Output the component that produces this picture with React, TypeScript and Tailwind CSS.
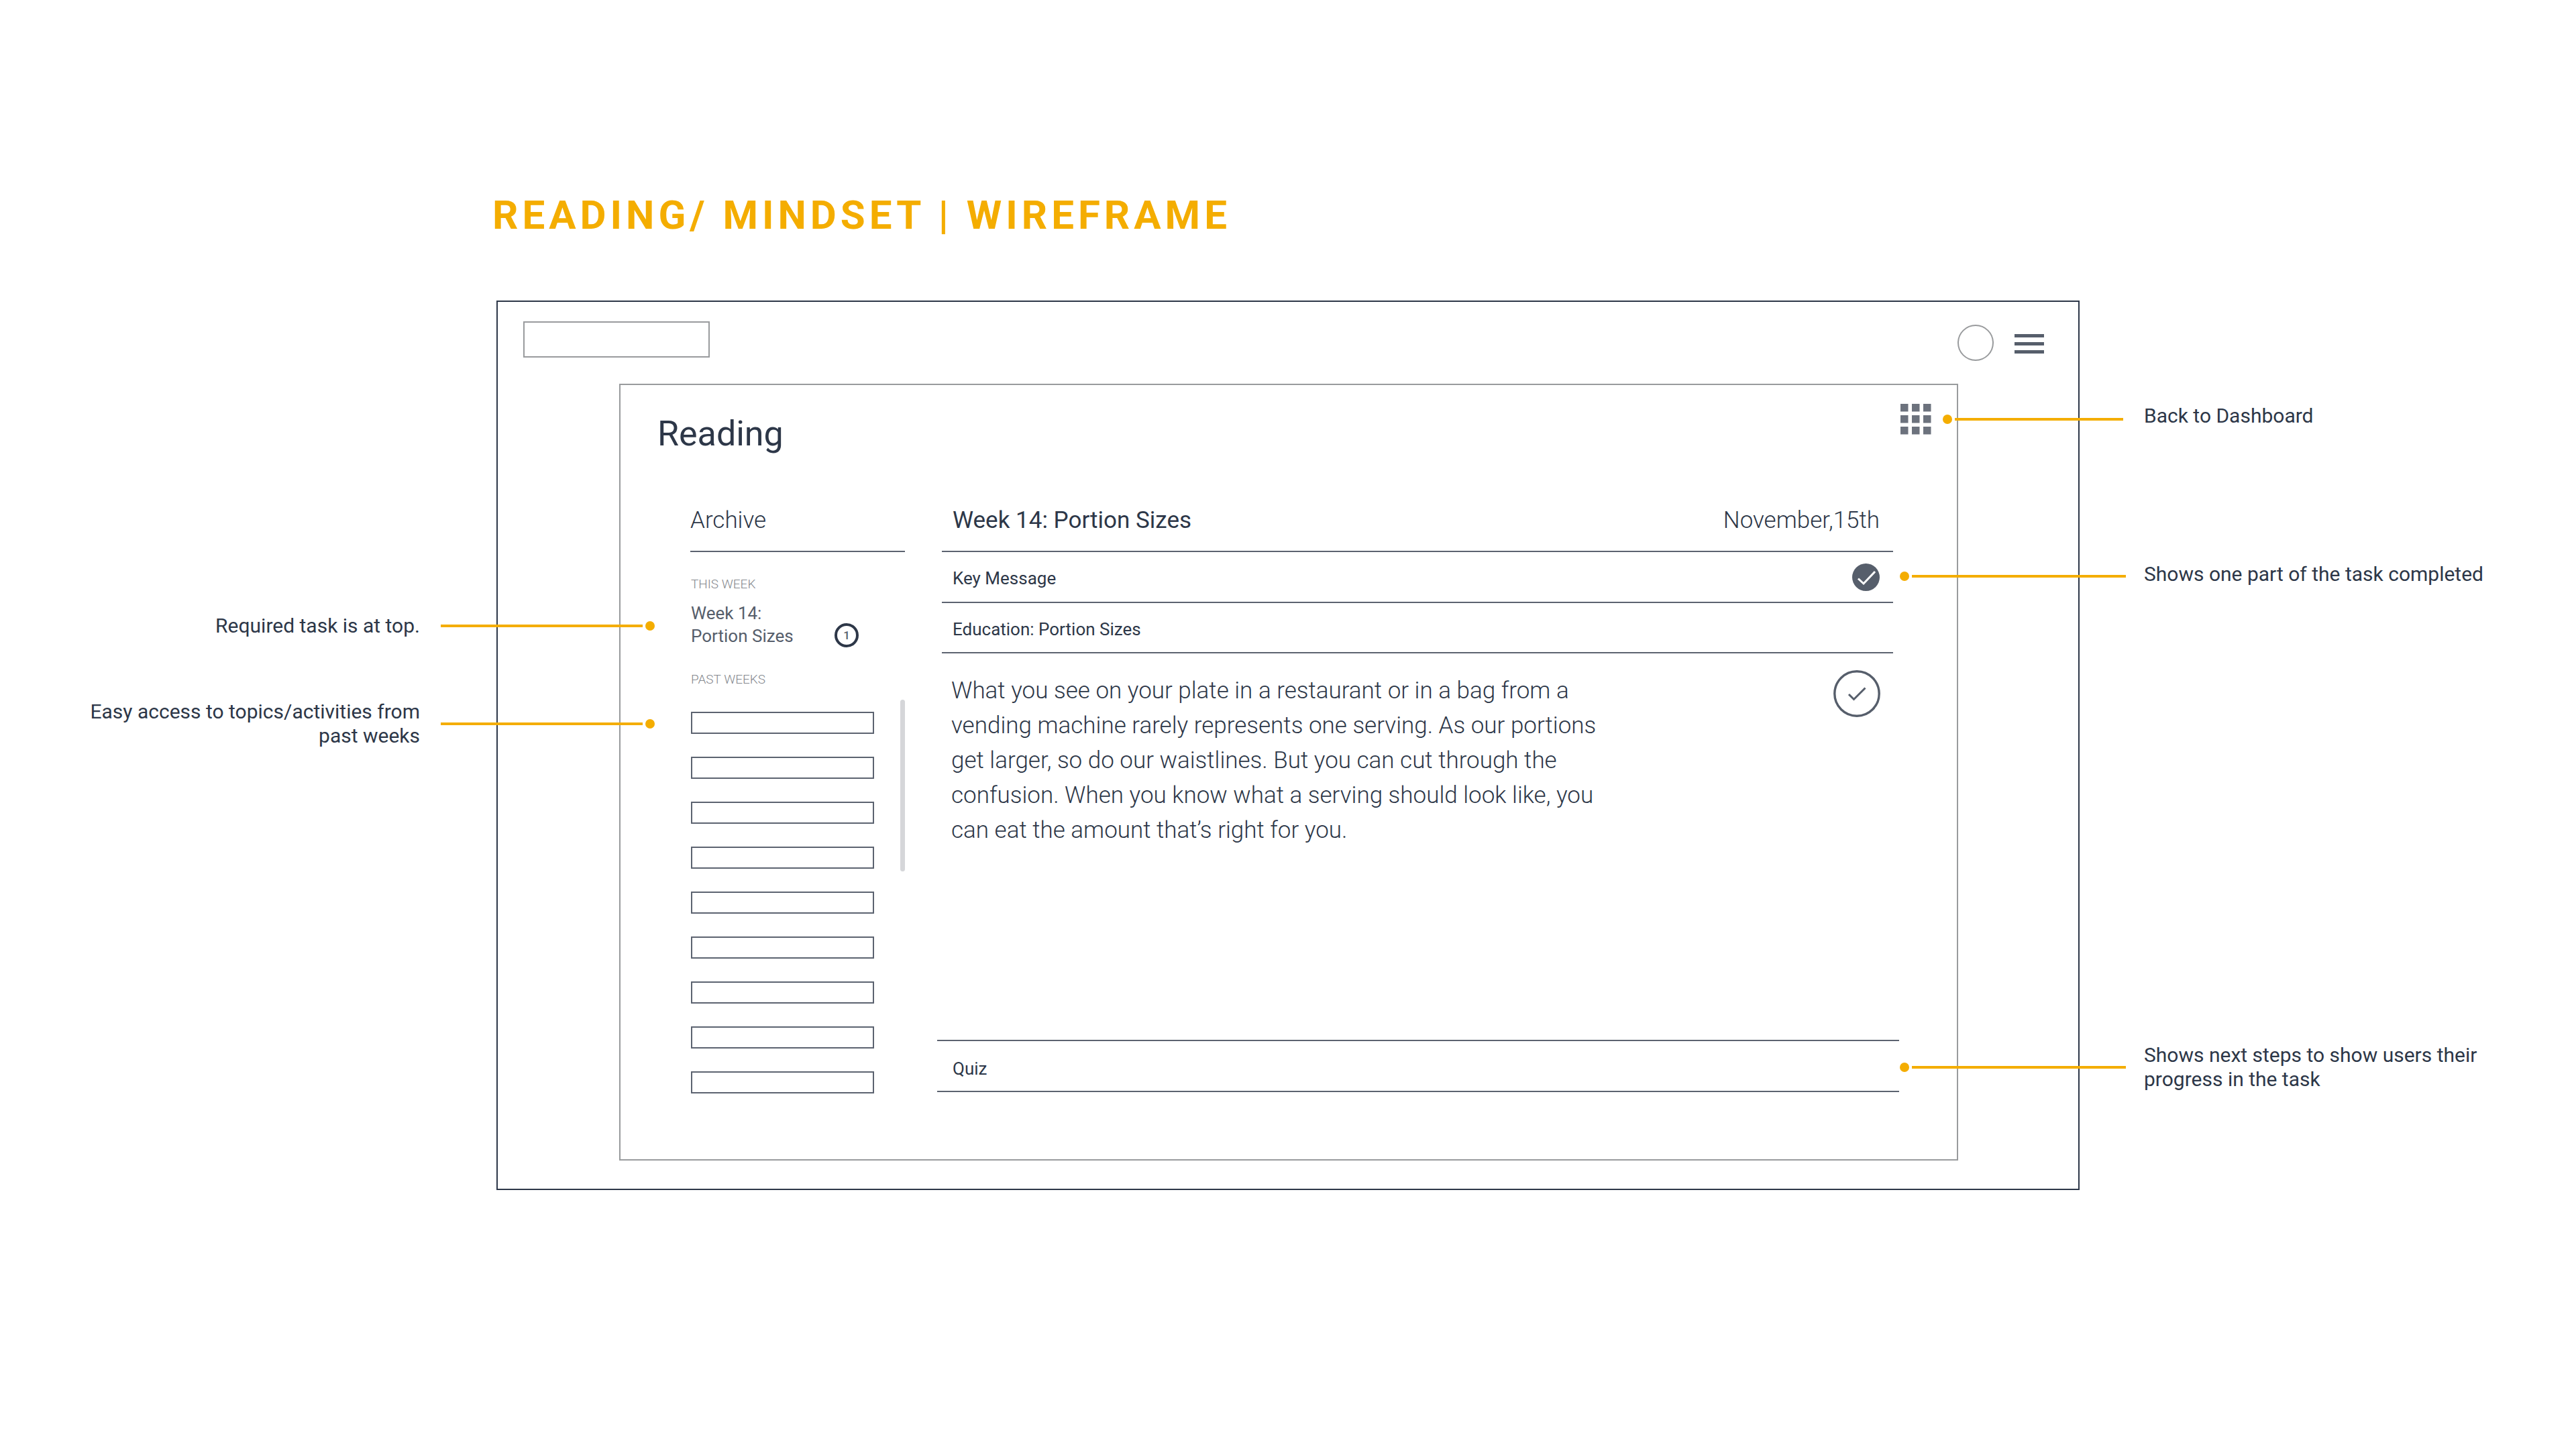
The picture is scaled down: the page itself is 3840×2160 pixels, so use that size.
import type { ReactNode } from "react";

const pastWeeks = [1, 2, 3, 4, 5, 6, 7, 8, 9];

function Leader({ side, length, place }: { side: "left" | "right"; length: string; place: string }) {
  const dot = <span className="size-[14px] shrink-0 rounded-full bg-[#f4ad00]" />;
  const line = <span className={`h-1 shrink-0 bg-[#f4ad00] ${length}`} />;
  return (
    <span aria-hidden="true" className={`absolute top-1/2 flex -translate-y-1/2 items-center gap-1 ${place}`}>
      {side === "left" ? line : dot}
      {side === "left" ? dot : line}
    </span>
  );
}

function LeftNote({ children, className }: { children: ReactNode; className: string }) {
  return (
    <p className={`relative z-10 w-[626px] pl-[100px] text-right ${className}`}>
      {children}
      <Leader side="left" length="w-[301px]" place="left-[657px]" />
    </p>
  );
}

function RightNote({ children, className, length, place }: { children: ReactNode; className: string; length: string; place: string }) {
  return (
    <p className={`relative z-10 ml-24 w-[540px] ${className}`}>
      {children}
      <Leader side="right" length={length} place={place} />
    </p>
  );
}

function GridIcon() {
  return (
    <svg viewBox="0 0 46 46" className="size-[46px] fill-[#6c727d]">
      {[0, 17, 34].map((y) => [0, 17, 34].map((x) => <rect key={`${x}-${y}`} x={x} y={y} width="11.5" height="11.5" />))}
    </svg>
  );
}

export default function App() {
  return (
    <div className="min-h-screen bg-white pt-[285px] font-['Roboto',sans-serif] text-[#2d3748]">
      <h1 className="ml-[734px] text-[60px] leading-[72px] font-bold tracking-[6px] text-[#f4ad00]">
        READING/ MINDSET | WIREFRAME
      </h1>

      <div className="mt-[91px] grid grid-cols-[740px_minmax(0,1fr)_740px]">
        <aside className="text-[30px] leading-9">
          <LeftNote className="mt-[467px]">Required task is at top.</LeftNote>
          <LeftNote className="mt-[92px]">Easy access to topics/activities from past weeks</LeftNote>
        </aside>

        <div className="border-2 border-[#2d3748] pr-[179px] pb-[42px] pl-[181px]">
          <header className="-mr-[128px] -ml-[143px] flex items-start justify-between pt-[29px]">
            <button type="button" aria-label="Home" className="h-[54px] w-[278px] border-2 border-[#999b9d]" />
            <div className="flex items-center gap-[31px] pt-[5px]">
              <button type="button" aria-label="Profile" className="size-[54px] rounded-full border-2 border-[#999b9d]" />
              <button type="button" aria-label="Menu" className="flex w-11 flex-col gap-[7px] pt-0.5">
                <span className="h-[5px] w-full bg-[#565e6b]" />
                <span className="h-[5px] w-full bg-[#565e6b]" />
                <span className="h-[5px] w-full bg-[#565e6b]" />
              </button>
            </div>
          </header>

          <main className="mt-[34px] border-2 border-[#999b9d] pb-[98px]">
            <div className="flex items-start justify-between pt-[28px] pr-[38px] pl-[55px]">
              <h2 className="pt-[13px] text-[52px] leading-[64px]">Reading</h2>
              <button type="button" aria-label="Dashboard">
                <GridIcon />
              </button>
            </div>

            <div className="mt-[62px] flex pl-[104px]">
              <nav aria-label="Archive" className="w-[320px] shrink-0">
                <h3 className="h-[82px] border-b-2 border-[#5c6370] pt-[11px] text-[35px] leading-[48px] font-light">Archive</h3>
                <div className="pl-px">
                  <h4 className="mt-[36px] text-[19px] leading-6 font-light text-[#85888e]">THIS WEEK</h4>
                  <a href="#week-14" className="mt-[14px] flex w-[250px] items-end justify-between text-[26px] leading-[34px] text-[#565e6b]">
                    <span>
                      Week 14:
                      <br />
                      Portion Sizes
                    </span>
                    <span className="flex size-9 items-center justify-center rounded-full border-4 border-[#2d3748] text-[17px] font-medium">1</span>
                  </a>
                  <h4 className="mt-[36px] text-[19px] leading-6 font-light text-[#85888e]">PAST WEEKS</h4>
                  <div className="mt-[18px] flex justify-between">
                    <ul className="mt-[18px] flex w-[273px] flex-col gap-[34px]">
                      {pastWeeks.map((week) => (
                        <li key={week} className="flex">
                          <button type="button" aria-label={`Past week ${week}`} className="h-[33px] w-full border-2 border-[#5c6370]" />
                        </li>
                      ))}
                    </ul>
                    <div className="h-[256px] w-[7px] rounded-full bg-[#d5d6d9]" />
                  </div>
                </div>
              </nav>

              <section className="mb-0.5 ml-[48px] flex grow flex-col pr-[86px]">
                <div className="mr-[9px] ml-[7px]">
                  <div className="flex h-[82px] justify-between border-b-2 border-[#5c6370] pt-[11px] pr-[20px] pl-[16px] text-[35px] leading-[48px]">
                    <h3>Week 14: Portion Sizes</h3>
                    <time className="font-light">November,15th</time>
                  </div>
                  <div className="flex h-[76px] items-center justify-between border-b-2 border-[#5c6370] pr-[20px] pl-[16px] text-[26px]">
                    <h4 className="pt-1">Key Message</h4>
                    <svg viewBox="0 0 41 41" className="size-[41px]" role="img" aria-label="Completed">
                      <circle cx="20.5" cy="20.5" r="20.5" fill="#565e6b" />
                      <path d="M9 22.5 L17 30 L34 12" fill="none" stroke="#fff" strokeWidth="3" />
                    </svg>
                  </div>
                  <div className="flex h-[75px] items-center border-b-2 border-[#5c6370] pl-[16px] text-[26px]">
                    <h4 className="pt-1.5">Education: Portion Sizes</h4>
                  </div>
                  <div className="flex justify-between pt-[25px] pr-[19px] pl-[14px]">
                    <p className="w-[970px] pt-[5px] text-[35px] leading-[52px] font-light">
                      What you see on your plate in a restaurant or in a bag from a vending machine rarely represents one serving. As our
                      portions get larger, so do our waistlines. But you can cut through the confusion. When you know what a serving
                      should look like, you can eat the amount that’s right for you.
                    </p>
                    <button type="button" aria-label="Mark as complete" className="h-[70px]">
                      <svg viewBox="0 0 70 70" className="size-[70px]" fill="none" stroke="#565e6b">
                        <circle cx="35" cy="35" r="33.2" strokeWidth="3.4" />
                        <path d="M23 36 L30.500 43.500 L47.500 26.500" strokeWidth="3" />
                      </svg>
                    </button>
                  </div>
                </div>
                <div className="mt-auto flex h-[78px] items-center border-y-2 border-[#5c6370] pl-[23px] text-[26px]">
                  <h4 className="pt-2">Quiz</h4>
                </div>
              </section>
            </div>
          </main>
        </div>

        <aside className="text-[30px] leading-9">
          <RightNote className="mt-[154px] pb-[10px]" length="w-[251px]" place="-left-[300px]">
            Back to Dashboard
          </RightNote>
          <RightNote className="mt-[190px] pb-[6px]" length="w-[319px]" place="-left-[364px]">
            Shows one part of the task completed
          </RightNote>
          <RightNote className="mt-[675px]" length="w-[319px]" place="-left-[364px]">
            Shows next steps to show users their progress in the task
          </RightNote>
        </aside>
      </div>
    </div>
  );
}
